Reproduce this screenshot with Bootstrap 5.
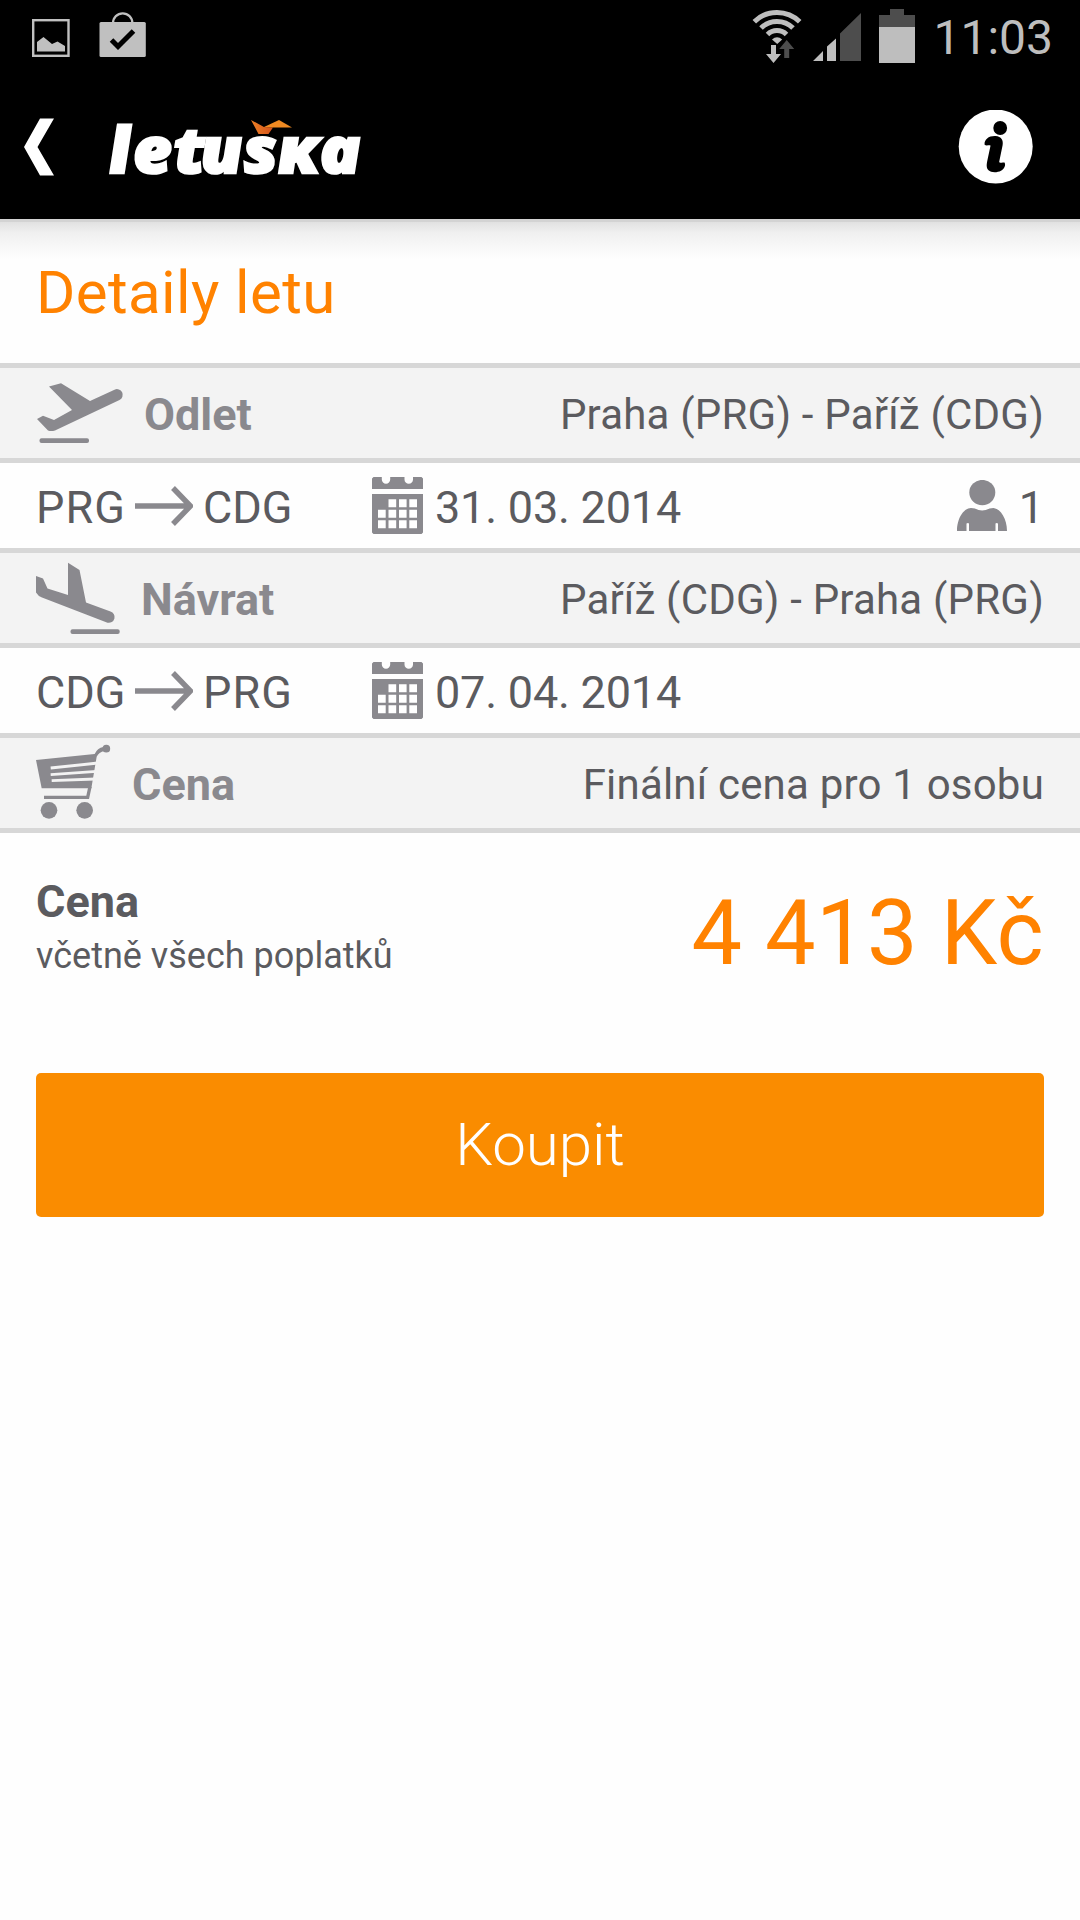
<!DOCTYPE html>
<html lang="cs">
<head>
<meta charset="utf-8">
<meta name="viewport" content="width=device-width, initial-scale=1">
<title>Detaily letu</title>
<link href="https://cdn.jsdelivr.net/npm/bootstrap@5.3.0/dist/css/bootstrap.min.css" rel="stylesheet">
<style>
body{font-family:Roboto,"Noto Sans",sans-serif;background:#fefefe;color:#5b5b5f;min-height:1920px;line-height:1}
svg{display:block;flex:none}
.statusbar{height:75px;padding:0 27px 0 32px;color:#bebebe}
.clock{font-size:48px;line-height:75px}
.appbar{height:144px;padding:0 47px 0 24px}
.page-title{height:144px;padding:0 36px;background:linear-gradient(#d3d3d3 0 3px,#e1e1e1 3px,#f0f0f0 14px,#fefefe 40px)}
.page-title h1{font-size:60px;line-height:70px;color:#ff8200;padding-top:39px;letter-spacing:.4px}
.leg-head{height:100px;border:solid #d7d7d7;border-width:5px 0;background:#f3f3f3;padding:0 36px}
.leg-name{font-size:45px;font-weight:700;color:#8a898e;line-height:86px;padding-top:4px}
.leg-route{font-size:42px;line-height:86px;padding-top:4px;letter-spacing:.2px}
.leg-row{height:85px;padding:0 36px;font-size:45px;line-height:81px}
.leg-row span{padding-top:4px}
.from-to{width:336px}
.code-a{width:99px}
.code-b{padding-left:10px}
.prg{letter-spacing:1.1px}
.date{letter-spacing:-.2px}
.price-row{height:240px;padding:0 36px}
.price-label{font-size:45px;line-height:54px;padding-top:42px}
.price-note{font-size:36px;line-height:50px;padding-top:2px}
.price-sum{font-size:90px;line-height:100px;color:#ff8200;padding-top:51px;letter-spacing:.4px}
.buy-wrap{padding:0 36px}
.buy{--bs-btn-bg:#fa8c00;--bs-btn-color:#fff;--bs-btn-border-width:0;--bs-btn-border-radius:5px;height:144px;font-size:60px;font-weight:300}
</style>
</head>
<body>
<svg width="0" height="0" class="position-absolute" aria-hidden="true">
<defs>
<symbol id="arrow" viewBox="0 0 58 40"><path d="M0 20H55M38 2L55.500 20L38 38" fill="none" stroke="#8a898e" stroke-width="5.400"/></symbol>
<symbol id="calendar" viewBox="0 0 51 57"><path fill="#8a898e" d="M1.500 0H9.800V2.500A4.200 4.200 0 0 0 18.200 2.500V0H32.500V2.500A4.200 4.200 0 0 0 41 2.500V0H49.500L51 1.500V12H0V1.500ZM0 17H51V55.500L49.500 57H1.500L0 55.500Z"/><path fill="#fff" d="M16.500 22.300h7.700v8h-7.700zM27 22.300h7.600v8H27zM37.300 22.300H45v8h-7.700zM6 32.700h7.700v8H6zM16.500 32.700h7.700v8h-7.700zM27 32.700h7.600v8H27zM37.300 32.700H45v8h-7.700zM6 43.200h7.700v8H6zM16.500 43.200h7.700v8h-7.700zM27 43.200h7.600v8H27zM37.300 43.200H45v8h-7.700z"/></symbol>
</defs>
</svg>
<header class="bg-black">
<div class="statusbar d-flex justify-content-between">
<div class="d-flex">
<svg width="114" height="75" viewBox="32 0 114 75" fill="#c0c0c0"><rect x="33.200" y="20.200" width="35.300" height="35.600" fill="none" stroke="#c0c0c0" stroke-width="2.400"/><path d="M37 42L43.500 37L52 44L57.500 41.500L65 46V51.500H37Z"/><rect x="99.500" y="22" width="46.300" height="35" rx="1.500"/><path d="M113 23A9.700 9.700 0 0 1 132.400 23" fill="none" stroke="#c0c0c0" stroke-width="2.200"/><path d="M111.500 40L118 46.500L133.500 31" fill="none" stroke="#000" stroke-width="5"/></svg>
</div>
<div class="d-flex">
<svg width="182.500" height="75" viewBox="751 0 182.500 75" fill="#bebebe"><g fill="none" stroke="#bebebe" stroke-width="5"><path d="M754.300 21.700A32 31.500 0 0 1 799.700 21.700"/><path d="M761 28.100A22.600 22.500 0 0 1 793 28.100"/><path d="M767.500 34.500A13.500 13.500 0 0 1 786.500 34.500"/></g><path d="M772 39.500Q777 35 782.200 39.500L777.200 44Z"/><path d="M771 45h5v9h5l-7.500 9l-7.500-9h5z"/><path fill="#4d4d4d" d="M786.700 40l7.500 9h-5v9h-5v-9h-5z"/><path d="M813 61L823 51V61ZM827 61V46.500L836 38.500V61Z"/><path fill="#4d4d4d" d="M840 61V33.500L861 13V61ZM890 9h14v6h11v12h-36V15h11z"/><path d="M879 27h36v36h-36z"/></svg>
<span class="clock">11:03</span>
</div>
</div>
<nav class="appbar d-flex align-items-center">
<svg width="30" height="58" viewBox="24 118.500 30 58" fill="#fff"><path d="M40 119H54L37.500 147.500L54 176H40L24 147.500Z"/></svg>
<svg class="ms-5" width="264" height="144" viewBox="102 75 264 144" role="img" aria-label="letuška"><defs><linearGradient id="wing"><stop offset="0" stop-color="#ee8024"/><stop offset="1" stop-color="#d4531c"/></linearGradient></defs><g fill="#fff" stroke="#fff" stroke-width="2.400" font-family="'Open Sans'" font-weight="800" font-style="italic" font-size="63.500"><text transform="translate(3 172.500) skewX(4) scale(1.080 1)" x="98.900 121.200 159.600 183.700 223.600 255 294.200">letusĸa</text></g><path fill="url(#wing)" d="M251 120L264 127L273 127.500L268.500 134H258.500Z"/><path fill="#f08a22" d="M264 127L279 120L292 127.500H273Z"/></svg>
<svg class="ms-auto" width="75" height="75" viewBox="958 109.700 75 75"><circle cx="995.700" cy="146.200" r="37" fill="#fff"/><circle cx="1000.200" cy="127.700" r="6.900"/><path d="M984.600 144.500C984 139 989 135.500 995.500 135.800C1001.500 136.200 1003.500 140 1002.600 145L999.200 161.500C999.500 163.300 1002 161.500 1004.500 162.300C1006 165 1004.500 168.500 1001 170.500C997 172.600 991 172.500 988.500 170C986 167.500 986.700 163.500 987.300 160.500L990.500 145.500C990 144 986.500 146 984.600 144.500Z"/></svg>
</nav>
</header>
<main>
<div class="page-title"><h1 class="m-0 fw-normal">Detaily letu</h1></div>
<section>
<div class="leg-head d-flex align-items-center">
<svg width="108" height="90" viewBox="36 368 108 90" fill="#8a898e"><path d="M49 386.500L61 383.200L90 401L114.500 389.700A5.700 5.700 0 0 1 119.500 400L55 430.500Q51 431.500 48 430.500L37 419L43 415.800L54 420L72 410Z"/><rect x="39.500" y="438.300" width="49.500" height="4.700" rx="2"/></svg>
<h2 class="leg-name m-0">Odlet</h2>
<span class="leg-route ms-auto">Praha (PRG) - Paříž (CDG)</span>
</div>
<div class="leg-row d-flex align-items-center">
<div class="from-to d-flex align-items-center"><span class="code-a prg">PRG</span><svg width="58" height="40"><use href="#arrow"/></svg><span class="code-b">CDG</span></div>
<svg width="51" height="57"><use href="#calendar"/></svg>
<span class="date ps-2 ms-1">31. 03. 2014</span>
<svg class="ms-auto me-2" width="54" height="52" viewBox="957 480 54 52" fill="#8a898e"><ellipse cx="982.300" cy="492.600" rx="13" ry="12.700"/><path d="M957 531C957 519 963 508.500 971 508L975 508.500Q982 512.500 989.500 508.500L993.500 508C1001 509 1007 519 1007 531H998V523.500Q996.500 522.500 995.500 523.500V531H969V523.500Q968 522.500 966.500 523.500V531Z"/></svg>
<span>1</span>
</div>
</section>
<section>
<div class="leg-head d-flex align-items-center">
<svg width="105" height="90" viewBox="36 553 105 90" fill="#8a898e"><path d="M36 576L43 578.500L47.500 588.500L68 595V562.800L79.500 570L86 602.500L110.500 611.500A5.800 5.800 0 0 1 107.500 622.700L42 597.500Q38 596 36 592.500Z"/><rect x="70.500" y="629.300" width="49.200" height="4.700" rx="2"/></svg>
<h2 class="leg-name m-0">Návrat</h2>
<span class="leg-route ms-auto">Paříž (CDG) - Praha (PRG)</span>
</div>
<div class="leg-row d-flex align-items-center">
<div class="from-to d-flex align-items-center"><span class="code-a">CDG</span><svg width="58" height="40"><use href="#arrow"/></svg><span class="code-b prg">PRG</span></div>
<svg width="51" height="57"><use href="#calendar"/></svg>
<span class="date ps-2 ms-1">07. 04. 2014</span>
</div>
</section>
<section>
<div class="leg-head d-flex align-items-center">
<svg width="96" height="90" viewBox="108 594 288 270" fill="#8a898e"><path d="M108 660L284 642Q292 624 310 621L314 632Q296 636 290 650L274 745H125Z"/><circle cx="319" cy="626" r="11.500"/><path d="M270 740L263 772H132" fill="none" stroke="#8a898e" stroke-width="10"/><path d="M152 684L294 669M152 704L290 694M155 722L286 717" stroke="#f3f3f3" stroke-width="8.500"/><circle cx="147" cy="811" r="25"/><circle cx="254" cy="811" r="25"/></svg>
<h2 class="leg-name m-0">Cena</h2>
<span class="leg-route ms-auto">Finální cena pro 1 osobu</span>
</div>
<div class="price-row d-flex justify-content-between">
<div><div class="price-label fw-bold">Cena</div><div class="price-note">včetně všech poplatků</div></div>
<div class="price-sum">4 413 Kč</div>
</div>
<div class="buy-wrap"><button class="btn buy w-100" type="button">Koupit</button></div>
</section>
</main>
<script src="https://cdn.jsdelivr.net/npm/bootstrap@5.3.0/dist/js/bootstrap.bundle.min.js"></script>
</body>
</html>
